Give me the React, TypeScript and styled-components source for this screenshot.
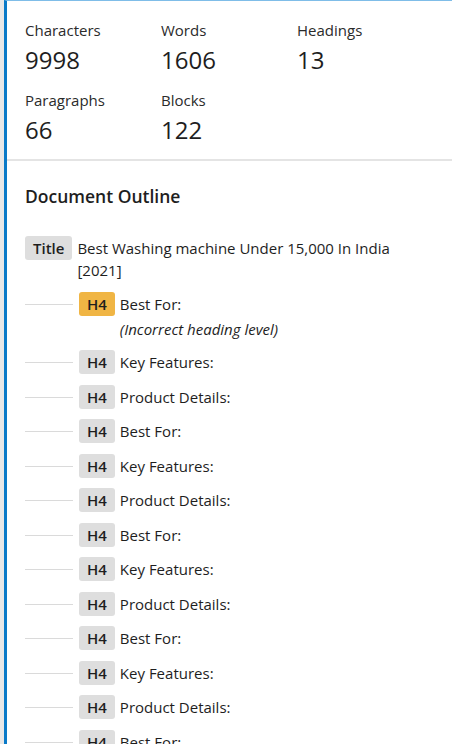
import { createGlobalStyle, styled } from "styled-components";

const GlobalStyle = createGlobalStyle`
  html, body {
    margin: 0;
    padding: 0;
    background: #ffffff;
  }
  body {
    font-family: "Open Sans", "Noto Sans", sans-serif;
    color: #1e1e1e;
    overflow: hidden;
  }
`;

const Frame = styled.div`
  display: flex;
  height: 744px;
  overflow: hidden;
  background: #e8e8e8;
`;

const Panel = styled.div`
  flex: 1;
  margin-left: 4px;
  border-left: 3px solid #0a7ac8;
  border-top: 1px solid #7fbde8;
  background: #ffffff;
  overflow: hidden;
`;

const Stats = styled.div`
  display: grid;
  grid-template-columns: repeat(3, 136px);
  row-gap: 14px;
  padding: 19px 18px 13px;
  border-bottom: 2px solid #e4e4e4;
`;

const Stat = styled.div`
  display: flex;
  flex-direction: column;
  gap: 4px;
`;

const StatLabel = styled.span`
  font-size: 15px;
  line-height: 20px;
  color: #2b2b2b;
`;

const StatValue = styled.span`
  font-size: 24px;
  line-height: 32px;
  color: #1e1e1e;
`;

const Outline = styled.div`
  padding: 23px 18px 0;
`;

const Heading = styled.h2`
  margin: 0 0 28px;
  font-size: 17.5px;
  font-weight: 600;
  line-height: 24px;
  color: #1e1e1e;
`;

const List = styled.div`
  display: flex;
  flex-direction: column;
  gap: 10.5px;
`;

const Row = styled.div`
  display: flex;
  align-items: flex-start;
  gap: 5px;
`;

const Connector = styled.span`
  flex: 0 0 48px;
  height: 1px;
  margin: 12px 1px 0 0;
  background: #dadada;
`;

const Badge = styled.span<{ $warn?: boolean }>`
  flex: none;
  padding: 0 8px;
  height: 24px;
  line-height: 24px;
  border-radius: 3px;
  font-size: 15px;
  font-weight: 600;
  color: #1e1e1e;
  background: ${(p) => (p.$warn ? "#f0b544" : "#dedede")};
`;

const Text = styled.div`
  font-size: 15px;
  line-height: 22px;
  padding-top: 1px;
  color: #1e1e1e;
`;

const Note = styled.div`
  font-style: italic;
  margin-top: 3px;
`;

const stats = [
  { label: "Characters", value: "9998" },
  { label: "Words", value: "1606" },
  { label: "Headings", value: "13" },
  { label: "Paragraphs", value: "66" },
  { label: "Blocks", value: "122" },
];

const cycle = ["Best For:", "Key Features:", "Product Details:"];
const headings = Array.from({ length: 13 }, (_, i) => cycle[i % 3]);

export default function App() {
  return (
    <>
      <GlobalStyle />
      <Frame>
        <Panel>
          <Stats>
            {stats.map((s) => (
              <Stat key={s.label}>
                <StatLabel>{s.label}</StatLabel>
                <StatValue>{s.value}</StatValue>
              </Stat>
            ))}
          </Stats>
          <Outline>
            <Heading>Document Outline</Heading>
            <List>
              <Row>
                <Badge>Title</Badge>
                <Text>Best Washing machine Under 15,000 In India [2021]</Text>
              </Row>
              {headings.map((h, i) => (
                <Row key={i}>
                  <Connector />
                  <Badge $warn={i === 0}>H4</Badge>
                  <Text>
                    {h}
                    {i === 0 && <Note>(Incorrect heading level)</Note>}
                  </Text>
                </Row>
              ))}
            </List>
          </Outline>
        </Panel>
      </Frame>
    </>
  );
}
